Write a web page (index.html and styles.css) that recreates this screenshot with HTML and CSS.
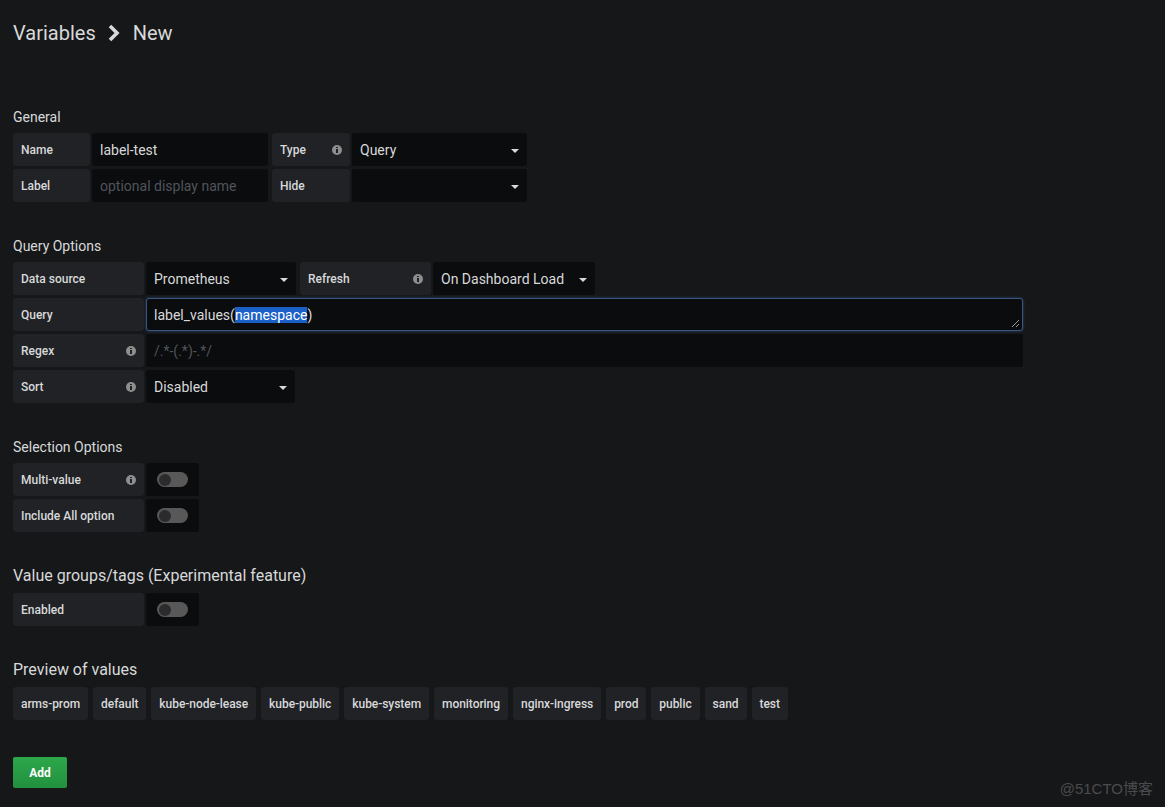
FILE: index.html
```html
<!DOCTYPE html>
<html>
<head>
<meta charset="utf-8">
<link rel="stylesheet" href="styles.css">
</head>
<body>
<div class="page">
  <h1 class="title">Variables
    <svg class="chev" width="14" height="18" viewBox="0 0 14 18"><polyline points="3,2 10,9 3,16" fill="none" stroke="#d8d9da" stroke-width="3.6" stroke-linejoin="miter"/></svg>
    New</h1>

  <h5 class="sec sec-first">General</h5>
  <div class="rows">
    <div class="row">
      <div class="lbl w77">Name</div>
      <div class="inp w176">label-test</div>
      <div class="lbl w78 ml4">Type <span class="info"></span></div>
      <div class="sel w175">Query<span class="caret"></span></div>
    </div>
    <div class="row">
      <div class="lbl w77">Label</div>
      <div class="inp w176 ph">optional display name</div>
      <div class="lbl w78 ml4">Hide</div>
      <div class="sel w175"><span class="caret"></span></div>
    </div>
  </div>

  <h5 class="sec">Query Options</h5>
  <div class="rows">
    <div class="row">
      <div class="lbl w131">Data source</div>
      <div class="sel w150">Prometheus<span class="caret"></span></div>
      <div class="lbl w131 ml4">Refresh <span class="info"></span></div>
      <div class="sel w162">On Dashboard Load<span class="caret"></span></div>
    </div>
    <div class="row">
      <div class="lbl w131">Query</div>
      <div class="inp ta w877">label_values(<span class="hl">namespace</span>)<svg class="grip" width="9" height="9" viewBox="0 0 9 9"><line x1="1" y1="8" x2="8" y2="1" stroke="#9a9a9a" stroke-width="1"/><line x1="5" y1="8" x2="8" y2="5" stroke="#9a9a9a" stroke-width="1"/></svg></div>
    </div>
    <div class="row">
      <div class="lbl w131">Regex <span class="info"></span></div>
      <div class="inp w877 ph">/.*-(.*)-.*/</div>
    </div>
    <div class="row">
      <div class="lbl w131">Sort <span class="info"></span></div>
      <div class="sel w149">Disabled<span class="caret"></span></div>
    </div>
  </div>

  <h5 class="sec">Selection Options</h5>
  <div class="rows">
    <div class="row">
      <div class="lbl w131">Multi-value <span class="info"></span></div>
      <div class="sw"><span class="track"><span class="knob"></span></span></div>
    </div>
    <div class="row">
      <div class="lbl w131">Include All option</div>
      <div class="sw"><span class="track"><span class="knob"></span></span></div>
    </div>
  </div>

  <h5 class="sec big">Value groups/tags (Experimental feature)</h5>
  <div class="rows">
    <div class="row">
      <div class="lbl w131">Enabled</div>
      <div class="sw"><span class="track"><span class="knob"></span></span></div>
    </div>
  </div>

  <h5 class="sec big">Preview of values</h5>
  <div class="tags">
    <span class="tag">arms-prom</span>
    <span class="tag">default</span>
    <span class="tag">kube-node-lease</span>
    <span class="tag">kube-public</span>
    <span class="tag">kube-system</span>
    <span class="tag">monitoring</span>
    <span class="tag">nginx-ingress</span>
    <span class="tag">prod</span>
    <span class="tag">public</span>
    <span class="tag">sand</span>
    <span class="tag">test</span>
  </div>

  <button class="btn">Add</button>
</div>
<div class="watermark">@51CTO博客</div>
</body>
</html>
```

FILE: styles.css
```css
html, body {
  margin: 0;
  padding: 0;
  background: #161719;
  color: #d8d9da;
  font-family: Roboto, "Noto Sans", "Liberation Sans", sans-serif;
  height: 807px;
  overflow: hidden;
}

.page {
  padding: 20px 13px 0 13px;
}

.title {
  margin: 0;
  font-size: 20px;
  font-weight: 400;
  line-height: 26px;
  display: flex;
  align-items: center;
  color: #d8d9da;
}

.chev {
  margin: 0 12px 0 11px;
}

.sec {
  margin: 35px 0 7px 0;
  font-size: 14px;
  font-weight: 400;
  line-height: 18px;
  color: #d8d9da;
}

.sec-first {
  margin-top: 62px;
}

.sec.big {
  font-size: 16px;
  line-height: 20px;
  margin-top: 34px;
  margin-bottom: 7px;
}

.rows {
  display: flex;
  flex-direction: column;
  gap: 3px;
}

.row {
  display: flex;
  height: 33px;
}

.lbl {
  box-sizing: border-box;
  background: #202226;
  font-size: 12px;
  font-weight: 500;
  padding: 0 8px;
  display: flex;
  align-items: center;
  justify-content: space-between;
  border-radius: 3px;
  margin-right: 2px;
  color: #d8d9da;
}

.inp, .sel {
  box-sizing: border-box;
  background: #0b0c0e;
  font-size: 14px;
  padding: 0 8px;
  display: flex;
  align-items: center;
  border-radius: 3px;
  color: #d8d9da;
  position: relative;
}

.ph {
  color: #4f545b;
}

.ta {
  border: 1px solid #3a5680;
  box-shadow: 0 0 3px rgba(64, 110, 180, 0.55);
  padding-left: 7px;
}

.hl {
  background: #1b5fc8;
  color: #ffffff;
}

.grip {
  position: absolute;
  right: 2px;
  bottom: 2px;
}

.ml4 { margin-left: 4px; }
.w77 { width: 77px; }
.w78 { width: 78px; }
.w131 { width: 131px; }
.w149 { width: 149px; }
.w150 { width: 150px; }
.w162 { width: 162px; }
.w175 { width: 175px; }
.w176 { width: 176px; }
.w877 { width: 877px; }

.caret {
  width: 0;
  height: 0;
  border-left: 4px solid transparent;
  border-right: 4px solid transparent;
  border-top: 4px solid #d8d9da;
  margin-top: 2px;
  margin-left: auto;
}

.info {
  width: 10px;
  height: 10px;
  border-radius: 50%;
  background: #8e8e8e;
  position: relative;
}

.info::before {
  content: "";
  position: absolute;
  left: 4px;
  top: 4px;
  width: 2px;
  height: 4px;
  background: #202226;
}

.info::after {
  content: "";
  position: absolute;
  left: 4px;
  top: 2px;
  width: 2px;
  height: 1px;
  background: #202226;
}

.sw {
  width: 53px;
  background: #0b0c0e;
  border-radius: 3px;
  display: flex;
  align-items: center;
  justify-content: center;
}

.track {
  width: 31px;
  height: 15px;
  border-radius: 8px;
  background: #585858;
  display: flex;
  align-items: center;
  padding-left: 2px;
  box-sizing: border-box;
}

.knob {
  width: 12px;
  height: 12px;
  border-radius: 50%;
  background: #2b2b2d;
}

.tags {
  display: flex;
  gap: 5px;
}

.tag {
  height: 33px;
  box-sizing: border-box;
  background: #202226;
  border-radius: 3px;
  padding: 0 8px;
  font-size: 12px;
  font-weight: 500;
  letter-spacing: -0.05px;
  display: flex;
  align-items: center;
  color: #d8d9da;
}

.btn {
  margin-top: 37px;
  width: 54px;
  height: 31px;
  border: none;
  border-radius: 2px;
  background: linear-gradient(to bottom, #2ca84a, #22903f);
  color: #ffffff;
  font-family: Roboto, "Liberation Sans", sans-serif;
  font-size: 12px;
  font-weight: 700;
  padding: 0;
  display: block;
}

.watermark {
  position: absolute;
  right: 12px;
  bottom: 9px;
  font-size: 15px;
  color: #4a4b4d;
  font-family: "Liberation Sans", "Noto Sans CJK SC", sans-serif;
}
```
